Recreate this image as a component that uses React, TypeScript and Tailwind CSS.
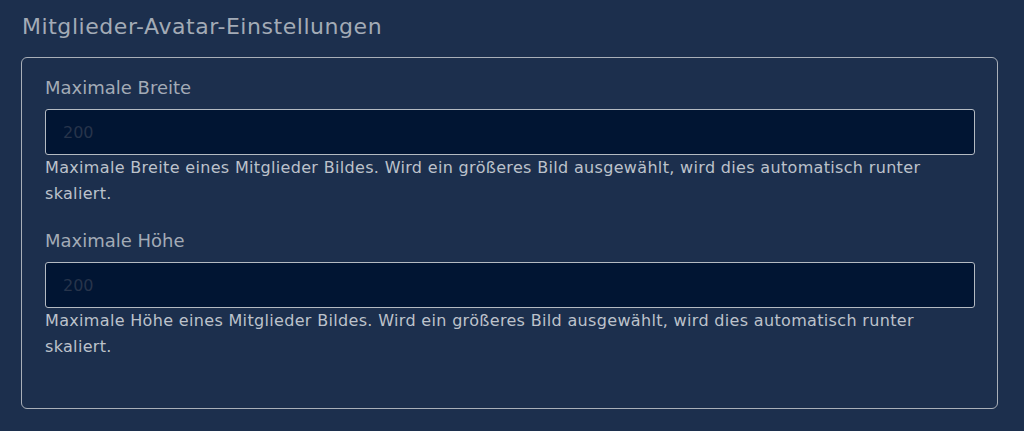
export default function App() {
  return (
    <div className="min-h-[431px] bg-[#1c2f4d] pl-[21px] pr-[26px] pt-[12px] pb-[22px] font-['DejaVu_Sans',sans-serif]">
      <h2 className="pl-[1px] text-[22px] leading-[30px] tracking-[0.55px] text-[#a3abb6]">
        Mitglieder-Avatar-Einstellungen
      </h2>
      <div className="mt-[15px] h-[352px] rounded-[6px] border border-[#a9afb8] pl-[23px] pr-[22px] pt-[18px]">
        <Field label="Maximale Breite" hint="Maximale Breite eines Mitglieder Bildes. Wird ein größeres Bild ausgewählt, wird dies automatisch runter skaliert." />
        <div className="h-[22px]" />
        <Field label="Maximale Höhe" hint="Maximale Höhe eines Mitglieder Bildes. Wird ein größeres Bild ausgewählt, wird dies automatisch runter skaliert." />
      </div>
    </div>
  );
}

function Field({ label, hint }: { label: string; hint: string }) {
  return (
    <div>
      <label className="block text-[18px] leading-[24px] text-[#a3abb6]">{label}</label>
      <input
        className="mt-[9px] block h-[46px] w-full rounded-[3px] border border-[#b4bac2] bg-[#011533] px-[17px] text-[16px] text-[#c5cad1] placeholder:text-[#27344b] outline-none"
        placeholder="200"
      />
      <p className="text-[16px] leading-[26px] tracking-[0.33px] text-[#bcc2cb]">{hint}</p>
    </div>
  );
}
